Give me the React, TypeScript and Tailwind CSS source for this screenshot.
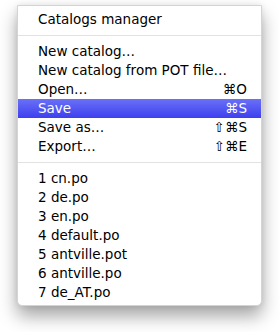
import React from "react";

type Item = { label: string; shortcut?: string; active?: boolean };

const group1: Item[] = [
  { label: "New catalog…" },
  { label: "New catalog from POT file…" },
  { label: "Open…", shortcut: "⌘O" },
  { label: "Save", shortcut: "⌘S", active: true },
  { label: "Save as…", shortcut: "⇧⌘S" },
  { label: "Export…", shortcut: "⇧⌘E" },
];

const group2: Item[] = [
  { label: "1 cn.po" },
  { label: "2 de.po" },
  { label: "3 en.po" },
  { label: "4 default.po" },
  { label: "5 antville.pot" },
  { label: "6 antville.po" },
  { label: "7 de_AT.po" },
];

function Row({ item }: { item: Item }) {
  return (
    <div
      className={
        item.active
          ? "flex h-[19px] items-center justify-between pl-[20px] pr-[14px] text-white bg-[linear-gradient(to_bottom,#6a70f6,#3d40ef)]"
          : "flex h-[19px] items-center justify-between pl-[20px] pr-[14px] text-black"
      }
    >
      <span>{item.label}</span>
      {item.shortcut && <span>{item.shortcut}</span>}
    </div>
  );
}

function Separator() {
  return (
    <div className="flex h-[13px] items-center">
      <div className="h-px w-full bg-[#e2e2e2]" />
    </div>
  );
}

export default function App() {
  return (
    <div className="min-h-[332px] w-[279px] bg-white pt-[5px] pl-[17px]">
      <div
        className="w-[245px] rounded-b-[5px] border border-[#d4d4d4] bg-white pt-[4px] pb-[3px] text-[13.5px] leading-[19px] shadow-[0_10px_18px_rgba(0,0,0,0.36),0_0_6px_rgba(0,0,0,0.08)]"
        style={{ fontFamily: '"DejaVu Sans", "Lucida Grande", sans-serif' }}
      >
        <Row item={{ label: "Catalogs manager" }} />
        <Separator />
        {group1.map((it) => (
          <Row key={it.label} item={it} />
        ))}
        <Separator />
        {group2.map((it) => (
          <Row key={it.label} item={it} />
        ))}
      </div>
    </div>
  );
}
